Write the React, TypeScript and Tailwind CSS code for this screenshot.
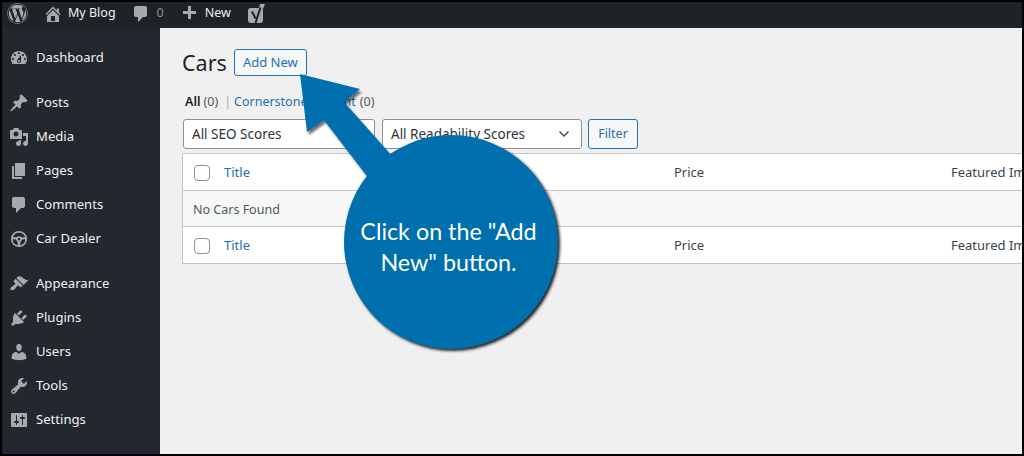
import { FaWordpress } from "react-icons/fa"
import { ChevronDown } from "lucide-react"

const icons: Record<string, string> = {
    dashboard: "M3.76 16h12.48c1.1-1.37 1.76-3.11 1.76-5 0-4.42-3.58-8-8-8s-8 3.58-8 8c0 1.89.66 3.63 1.76 5zM10 4c.55 0 1 .45 1 1s-.45 1-1 1-1-.45-1-1 .45-1 1-1zM6 6c.55 0 1 .45 1 1s-.45 1-1 1-1-.45-1-1 .45-1 1-1zm8 0c.55 0 1 .45 1 1s-.45 1-1 1-1-.45-1-1 .45-1 1-1zm-5.37 5.55L12 7v6c0 1.1-.9 2-2 2s-2-.9-2-2c0-.57.24-1.08.63-1.45zM4 10c.55 0 1 .45 1 1s-.45 1-1 1-1-.45-1-1 .45-1 1-1zm12 0c.55 0 1 .45 1 1s-.45 1-1 1-1-.45-1-1 .45-1 1-1zm-5 3c0-.55-.45-1-1-1s-1 .45-1 1 .45 1 1 1 1-.45 1-1z",
    posts: "M10.44 3.02l1.82-1.82 6.36 6.35-1.83 1.82c-1.05-.68-2.48-.57-3.41.36l-.75.75c-.92.93-1.04 2.35-.35 3.41l-1.83 1.82-2.41-2.41-2.8 2.79c-.42.42-3.38 2.71-3.8 2.29s1.86-3.39 2.28-3.81l2.79-2.79L4.1 9.36l1.83-1.82c1.05.69 2.48.57 3.4-.36l.75-.75c.93-.92 1.05-2.35.36-3.41z",
    media: "M13 11V4c0-.55-.45-1-1-1h-1.67L9 1H5L3.67 3H2c-.55 0-1 .45-1 1v7c0 .55.45 1 1 1h10c.55 0 1-.45 1-1zM7 4.5c1.38 0 2.5 1.12 2.5 2.5S8.38 9.5 7 9.5 4.5 8.38 4.5 7 5.62 4.5 7 4.5zM14 6h5v10.5c0 1.38-1.12 2.5-2.5 2.5S14 17.88 14 16.5s1.12-2.5 2.5-2.5c.17 0 .34.02.5.05V9h-3V6zm-4 8.05V13h2v3.5c0 1.38-1.12 2.5-2.5 2.5S7 17.88 7 16.5 8.12 14 9.5 14c.17 0 .34.02.5.05z",
    pages: "M6 15V2h10v13H6zm-1 1h8v2H3V5h2v11z",
    comments: "M5 2h9c1.1 0 2 .9 2 2v7c0 1.1-.9 2-2 2h-2l-5 5v-5H5c-1.1 0-2-.9-2-2V4c0-1.1.9-2 2-2z",
    appearance: "M14.48 11.06L7.41 3.99l1.5-1.5c.5-.56 2.3-.47 3.51.32 1.21.8 1.43 1.28 2.91 2.1 1.18.64 2.45 1.26 4.45.85zm-.71.71L6.7 4.7 4.93 6.47c-.39.39-.39 1.02 0 1.41l1.06 1.06c.39.39.39 1.03 0 1.42-.6.6-1.43 1.11-2.21 1.69-.35.26-.7.53-1.01.84C1.43 13.23.9 14.92 1.85 15.87c.95.95 2.64.42 3.99-.92.31-.31.58-.66.84-1.01.58-.78 1.09-1.61 1.69-2.21.39-.39 1.03-.39 1.42 0l1.06 1.06c.39.39 1.02.39 1.41 0z",
    plugins: "M13.11 4.36L9.87 7.6 8 5.73l3.24-3.24c.35-.34 1.05-.2 1.56.32.52.51.66 1.21.31 1.55zm-8 1.77l.91-1.12 9.01 9.01-1.19.84c-.71.71-2.63 1.16-3.82 1.16H6.14L4.9 17.26c-.59.59-1.54.59-2.12 0-.59-.58-.59-1.53 0-2.12l1.24-1.24v-3.88c0-1.13.4-3.19 1.09-3.89zm7.26 3.97l3.24-3.24c.34-.35 1.04-.21 1.55.31.52.51.66 1.21.31 1.55l-3.24 3.25z",
    users: "M10 9.25c-2.27 0-2.73-3.44-2.73-3.44C7 4.02 7.82 2 9.97 2c2.16 0 2.98 2.02 2.71 3.81 0 0-.41 3.44-2.68 3.44zm0 2.57L12.72 10c2.39 0 4.52 2.33 4.52 4.53v2.49s-3.65 1.13-7.24 1.13c-3.65 0-7.24-1.13-7.24-1.13v-2.49c0-2.25 1.94-4.48 4.47-4.48z",
    tools: "M16.68 9.77c-1.34 1.34-3.3 1.67-4.95.99l-5.41 6.52c-.99.99-2.59.99-3.58 0s-.99-2.59 0-3.57l6.52-5.42c-.68-1.65-.35-3.61.99-4.95 1.28-1.28 3.12-1.62 4.72-1.06l-2.89 2.89 2.82 2.82 2.86-2.87c.53 1.58.18 3.39-1.08 4.65zM3.81 16.21c.4.39 1.04.39 1.43 0 .4-.4.4-1.04 0-1.43-.39-.4-1.03-.4-1.43 0-.39.39-.39 1.03 0 1.43z",
    settings: "M18 16V4c0-.55-.45-1-1-1H3c-.55 0-1 .45-1 1v12c0 .55.45 1 1 1h14c.55 0 1-.45 1-1zM8 11h1c.55 0 1 .45 1 1s-.45 1-1 1H8v1.5c0 .28-.22.5-.5.5s-.5-.22-.5-.5V13H6c-.55 0-1-.45-1-1s.45-1 1-1h1V5.5c0-.28.22-.5.5-.5s.5.22.5.5V11zm5-2h-1c-.55 0-1-.45-1-1s.45-1 1-1h1V5.5c0-.28.22-.5.5-.5s.5.22.5.5V7h1c.55 0 1 .45 1 1s-.45 1-1 1h-1v5.5c0 .28-.22.5-.5.5s-.5-.22-.5-.5V9z",
    home: "M16 8.5l1.53 1.53-1.06 1.06L10 4.62l-6.47 6.47-1.06-1.06L10 2.5l4 4v-2h2v4zm-6-2.46l6 5.99V18H4v-5.97zM12 17v-5H8v5h4z",
    plus: "M17 7v3h-5v5H9v-5H4V7h5V2h3v5h5z",
}

const Dashicon = ({ name, className }: { name: string; className: string }) => (
    <svg viewBox="0 0 20 20" className={className} fill="currentColor">
        <path d={icons[name]} fillRule="evenodd" />
    </svg>
)

const SteeringWheel = () => (
    <svg viewBox="0 0 20 20" className="w-[20px] h-[20px] text-[#a7aaad]" fill="currentColor">
        <path fillRule="evenodd" d="M10 1a9 9 0 1 0 0 18 9 9 0 0 0 0-18zm0 2a7 7 0 0 1 6.7 5H13c-.8-.6-1.9-1-3-1s-2.200.4-3 1H3.300A7 7 0 0 1 10 3zM3 10.200l3.500.3c.7 1 1.500 2 2 3.300l.3 3.100A7 7 0 0 1 3 10.200zm8.200 6.700.3-3.100c.5-1.300 1.300-2.300 2-3.300l3.500-.3a7 7 0 0 1-5.800 6.700zM10 9a1.300 1.300 0 1 1 0 2.600A1.300 1.300 0 0 1 10 9z" />
    </svg>
)

const Yoast = () => (
    <svg viewBox="0 0 18 20" className="w-[18px] h-[20px]">
        <rect x="0" y="4" width="15" height="15" rx="3" fill="#a7aaad" />
        <path fill="#a7aaad" d="M12 0h5l-5 12h-3z" />
        <path fill="none" stroke="#1d2327" strokeWidth="2" d="M4 7.500l3.500 7M12.500 3.500 7.500 19" />
    </svg>
)

const menu = [
    [["dashboard", "Dashboard"]],
    [["posts", "Posts"], ["media", "Media"], ["pages", "Pages"], ["comments", "Comments"], ["wheel", "Car Dealer"]],
    [["appearance", "Appearance"], ["plugins", "Plugins"], ["users", "Users"], ["tools", "Tools"], ["settings", "Settings"]],
]

const Sidebar = () => (
    <div className="w-[158px] shrink-0 bg-[#22282d] pt-[12px] flex flex-col gap-[11px]">
        {menu.map((group, i) => (
            <div key={i}>
                {group.map(([icon, label]) => (
                    <div key={label} className="h-[34px] flex items-center pl-[8px] pt-[2px] gap-[8px] text-[13.1px] text-[#f0f0f1]">
                        <span className="w-[18px] flex justify-center">
                            {icon === "wheel" ? <SteeringWheel /> : <Dashicon name={icon} className="w-[20px] h-[20px] shrink-0 text-[#a7aaad]" />}
                        </span>
                        <span>{label}</span>
                    </div>
                ))}
            </div>
        ))}
    </div>
)

const TopBar = () => (
    <div className="h-[26px] shrink-0 bg-[#1d2327] pb-[3px] flex items-center text-[12.5px] text-[#f0f0f1]">
        <FaWordpress className="w-[21px] h-[21px] ml-[5px] text-[#a7aaad]" />
        <Dashicon name="home" className="w-[20px] h-[20px] ml-[15px] text-[#a7aaad]" />
        <span className="ml-[5px]">My Blog</span>
        <Dashicon name="comments" className="w-[20px] h-[20px] ml-[15px] text-[#a7aaad]" />
        <span className="ml-[6px] text-[#8c8f94]">0</span>
        <Dashicon name="plus" className="w-[20px] h-[20px] ml-[15px] text-[#a7aaad]" />
        <span className="ml-[6px]">New</span>
        <span className="ml-[17px]"><Yoast /></span>
    </div>
)

const Select = ({ label, className }: { label: string; className: string }) => (
    <div className={`h-[30px] bg-white border border-[#8c8f94] rounded-[3px] flex items-center justify-between pl-[8px] pr-[9px] text-[13.5px] text-[#2c3338] ${className}`}>
        <span>{label}</span>
        <ChevronDown className="w-[16px] h-[16px] text-[#50575e]" strokeWidth={2.5} />
    </div>
)

const HeadRow = ({ className }: { className: string }) => (
    <div className={`flex items-center pt-px text-[13px] text-[#3c434a] ${className}`}>
        <span className="w-[16px] h-[16px] shrink-0 ml-[11px] bg-white border border-[#8c8f94] rounded-[4px]" />
        <span className="w-[450px] shrink-0 ml-[14px] text-[#2271b1]">Title</span>
        <span className="w-[277px] shrink-0">Price</span>
        <span className="whitespace-nowrap">Featured Image</span>
    </div>
)

const Callout = () => (
    <>
        <svg viewBox="0 0 120 120" className="absolute left-[290px] top-[64px] w-[120px] h-[120px] drop-shadow-[2px_3px_1px_rgba(0,0,0,0.55)]">
            <path fill="#006fad" d="M8 8 68 23 52 36 100 90 75 110 32 54 15 66z" />
        </svg>
        <div className="absolute left-[342px] top-[133px] w-[214px] h-[214px] rounded-full bg-[#006fad] shadow-[2px_2px_3px_rgba(0,0,0,0.85)] flex items-center justify-center text-center text-white text-[23.3px] leading-[31px] font-['Lato',sans-serif]">
            <span className="w-[190px] mt-[9px] mr-[5px]">Click on the "Add New" button.</span>
        </div>
    </>
)

const App = () => {
    return (
        <div className="relative w-[1024px] h-[456px] bg-black border-2 border-black overflow-hidden flex flex-col font-['Noto_Sans',sans-serif]">
            <TopBar />
            <div className="flex flex-1 min-h-0">
                <Sidebar />
                <div className="flex-1 min-w-0 bg-[#f0f0f1] pl-[22px] pt-[20px] overflow-hidden">
                    <div className="flex items-center h-[30px]">
                        <h1 className="text-[21.5px] text-[#1d2327]">Cars</h1>
                        <button className="ml-[7px] self-start mt-px w-[73px] h-[27px] bg-[#f6f7f7] border border-[#2271b1] rounded-[3px] text-[13px] text-[#2271b1]">Add New</button>
                    </div>
                    <div className="flex items-center mt-[14px] ml-[3px] h-[20px] text-[12.5px] text-[#50575e]">
                        <span className="font-semibold text-[#1d2327]">All</span>
                        <span className="ml-[3px]">(0)</span>
                        <span className="ml-[6px] mr-[3px] text-[#a7aaad]">|</span>
                        <span className="text-[#2271b1]">Cornerstone content</span>
                        <span className="ml-[4px]">(0)</span>
                    </div>
                    <div className="flex items-center mt-[7px] ml-px gap-[7px]">
                        <Select label="All SEO Scores" className="w-[192px]" />
                        <Select label="All Readability Scores" className="w-[200px]" />
                        <button className="w-[50px] h-[30px] -ml-[1px] bg-[#f6f7f7] border border-[#2271b1] rounded-[3px] text-[12.5px] text-[#2271b1]">Filter</button>
                    </div>
                    <div className="mt-[4px] border border-[#c3c4c7] border-r-0 bg-white">
                        <HeadRow className="h-[37px] border-b border-[#c3c4c7]" />
                        <div className="h-[36px] flex items-center pl-[10px] pt-[3px] bg-[#f6f7f7] border-b border-[#c3c4c7] text-[12.5px] text-[#50575e]">No Cars Found</div>
                        <HeadRow className="h-[36px]" />
                    </div>
                </div>
            </div>
            <Callout />
        </div>
    )
}

export default App
